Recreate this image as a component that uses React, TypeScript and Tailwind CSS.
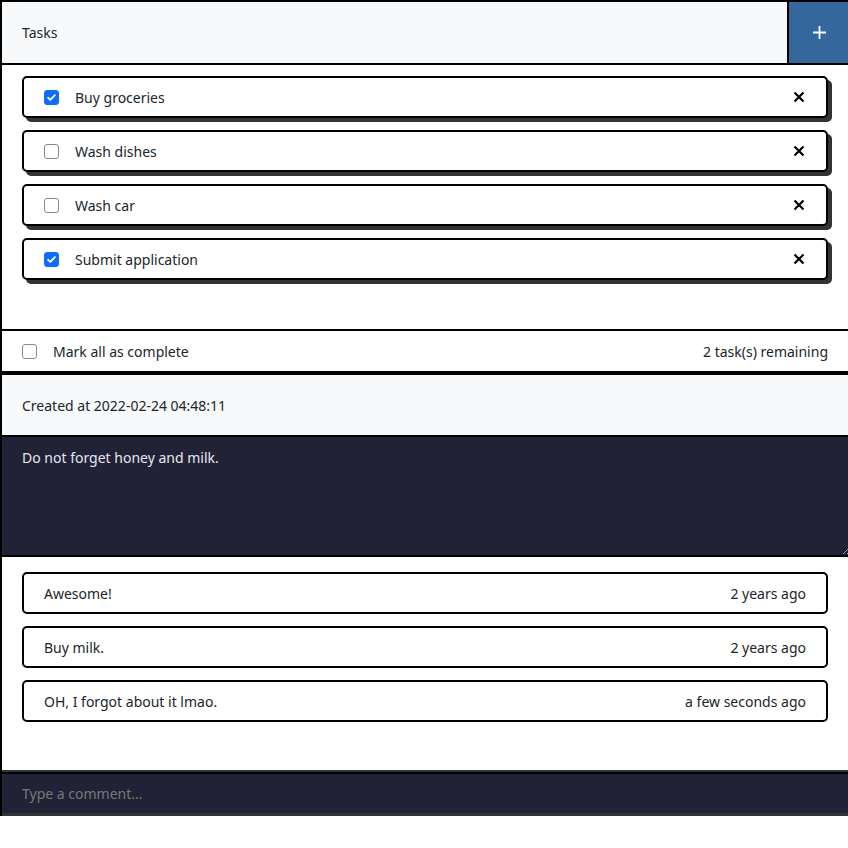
import { useState } from 'react'

type Task = { id: number; title: string; done: boolean }

const INITIAL: Task[] = [
  { id: 1, title: 'Buy groceries', done: true },
  { id: 2, title: 'Wash dishes', done: false },
  { id: 3, title: 'Wash car', done: false },
  { id: 4, title: 'Submit application', done: true },
]

const COMMENTS = [
  { text: 'Awesome!', when: '2 years ago' },
  { text: 'Buy milk.', when: '2 years ago' },
  { text: 'OH, I forgot about it lmao.', when: 'a few seconds ago' },
]

function Check({ checked, onChange }: { checked: boolean; onChange: () => void }) {
  return (
    <button
      onClick={onChange}
      className={`flex h-[15px] w-[15px] shrink-0 items-center justify-center rounded-[3px] border ${
        checked ? 'border-[#0d6efd] bg-[#0d6efd]' : 'border-[#8a8a8a] bg-white'
      }`}
    >
      {checked && (
        <svg width="11" height="11" viewBox="0 0 12 12" fill="none">
          <path d="M2.3 6.3l2.4 2.4 5-5.2" stroke="white" strokeWidth="2" strokeLinecap="round" strokeLinejoin="round" />
        </svg>
      )}
    </button>
  )
}

export default function App() {
  const [tasks, setTasks] = useState<Task[]>(INITIAL)
  const remaining = tasks.filter((t) => !t.done).length
  const allDone = remaining === 0

  const toggle = (id: number) => setTasks((ts) => ts.map((t) => (t.id === id ? { ...t, done: !t.done } : t)))

  return (
    <div className="w-[850px] border-l-2 border-t-2 border-black text-[14px] text-[#212529]" style={{ fontFamily: '"Noto Sans", sans-serif' }}>
      <header className="flex h-[63px] border-b-2 border-black bg-[#f8f9fa]">
        <div className="flex flex-1 items-center pl-5 text-[14px]">Tasks</div>
        <button className="flex w-[63px] items-center justify-center border-l-2 border-black bg-[#34679b]">
          <svg width="15" height="15" viewBox="0 0 15 15">
            <path d="M7.5 1v13M1 7.5h13" stroke="white" strokeWidth="1.8" />
          </svg>
        </button>
      </header>

      <div className="flex h-[266px] flex-col gap-3 border-b-2 border-black pl-5 pt-[11px]">
        {tasks.map((t) => (
          <div
            key={t.id}
            className="flex h-[42px] w-[806px] items-center rounded-[5px] border-2 border-black bg-white pl-5 pr-[21px] shadow-[4px_4px_0_#333]"
          >
            <Check checked={t.done} onChange={() => toggle(t.id)} />
            <span className="ml-4 flex-1">{t.title}</span>
            <svg width="12" height="12" viewBox="0 0 12 12">
              <path d="M1.5 1.5l9 9M10.5 1.5l-9 9" stroke="black" strokeWidth="2.2" />
            </svg>
          </div>
        ))}
      </div>

      <div className="flex h-[44px] items-center border-b-4 border-black pl-5 pr-[22px]">
        <Check checked={allDone} onChange={() => setTasks((ts) => ts.map((t) => ({ ...t, done: !allDone })))} />
        <span className="ml-4 flex-1">Mark all as complete</span>
        <span>{remaining} task(s) remaining</span>
      </div>

      <div className="flex h-[60px] items-center bg-[#f8f9fa] pl-5">Created at 2022-02-24 04:48:11</div>

      <textarea
        defaultValue="Do not forget honey and milk."
        className="block h-[122px] w-[848px] border-y-2 border-black bg-[#222236] px-5 pt-[10px] text-[#e6e6f2] outline-none"
      />

      <div className="flex h-[213px] flex-col gap-3 pl-5 pt-[15px]">
        {COMMENTS.map((c) => (
          <div key={c.text} className="flex h-[42px] w-[806px] items-center rounded-[5px] border-2 border-black pl-5 pr-5">
            <span className="flex-1">{c.text}</span>
            <span>{c.when}</span>
          </div>
        ))}
      </div>

      <div className="border-t-2 border-[#333]">
        <input
          placeholder="Type a comment..."
          className="block h-[44px] w-[848px] border-t-2 border-b-[3px] border-t-black border-b-[#333] bg-[#222236] px-5 text-[#e6e6f2] outline-none placeholder:text-[#777]"
        />
      </div>
    </div>
  )
}
